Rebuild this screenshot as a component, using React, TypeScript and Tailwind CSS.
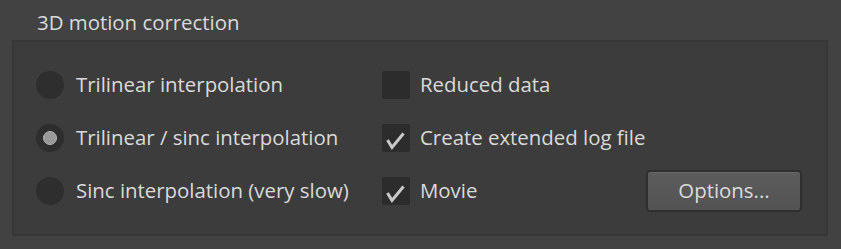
import React from "react";

const font = { fontFamily: '"Open Sans", "Noto Sans", sans-serif' };

function Radio({ checked }: { checked?: boolean }) {
  return (
    <div className="w-7 h-7 rounded-full bg-[#2e2e2e] flex items-center justify-center shrink-0">
      {checked && <div className="w-[14px] h-[14px] rounded-full bg-[#989898] border border-[#b4b4b4]" />}
    </div>
  );
}

function Check({ checked }: { checked?: boolean }) {
  return (
    <div className="w-7 h-7 rounded-[2px] bg-[#2c2c2c] shrink-0 flex items-center justify-center">
      {checked && (
        <svg width="28" height="28" viewBox="0 0 28 28">
          <path d="M5.5 16 L10 23.5 L21.5 9.5" fill="none" stroke="#c9c9c9" strokeWidth="3" strokeLinecap="butt" strokeLinejoin="miter" />
        </svg>
      )}
    </div>
  );
}

function Row({ radio, radioLabel, check, checkLabel, button }: { radio?: boolean; radioLabel: string; check?: boolean; checkLabel: string; button?: boolean }) {
  return (
    <div className="flex items-center h-[53px]">
      <div className="w-[346px] flex items-center gap-3">
        <Radio checked={radio} />
        <span>{radioLabel}</span>
      </div>
      <div className="w-[264px] flex items-center gap-[10px]">
        <Check checked={check} />
        <span>{checkLabel}</span>
      </div>
      {button && (
        <button className="w-[156px] h-[42px] rounded-[4px] border-2 border-[#2f2f2f] bg-gradient-to-b from-[#5c5c5c] to-[#535353] shadow-[inset_0_1px_0_#676767] text-[#dcdcdc]">
          Options...
        </button>
      )}
    </div>
  );
}

export default function App() {
  return (
    <div className="w-[841px] h-[249px] bg-[#424242] text-[#dadada] text-[20.4px] leading-none" style={font}>
      <div className="pl-[37px] pt-[12px] h-[40px]">3D motion correction</div>
      <div className="ml-[12px] w-[816px] h-[196px] bg-[#3c3c3c] border-2 border-[#373737] pl-[22px] pt-[16px]">
        <Row radioLabel="Trilinear interpolation" checkLabel="Reduced data" />
        <Row radio radioLabel="Trilinear / sinc interpolation" check checkLabel="Create extended log file" />
        <Row radioLabel="Sinc interpolation (very slow)" check checkLabel="Movie" button />
      </div>
    </div>
  );
}
